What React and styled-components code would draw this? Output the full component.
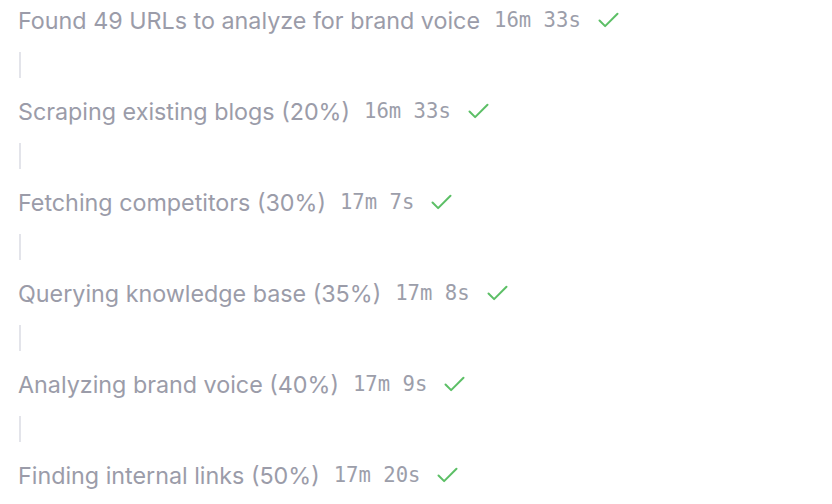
import React from "react";
import styled, { createGlobalStyle } from "styled-components";

const Global = createGlobalStyle`
  html, body { margin: 0; padding: 0; background: #ffffff; }
`;

const List = styled.div`
  display: flex;
  flex-direction: column;
  padding-left: 18px;
`;

const Row = styled.div`
  display: flex;
  align-items: center;
  height: 40px;
  gap: 14px;
`;

const Label = styled.span`
  font-family: Inter, "Noto Sans", sans-serif;
  font-size: 23.3px;
  color: #9b9ca9;
`;

const Time = styled.span`
  font-family: "DejaVu Sans Mono", "Liberation Mono", monospace;
  font-size: 20.6px;
  color: #9c9eaa;
`;

const Check = styled.svg`
  width: 27px;
  height: 27px;
  color: #5cbf66;
`;

const Connector = styled.div`
  width: 2px;
  height: 26px;
  margin: 12px 0 13px 1px;
  background: #e3e4ea;
`;

const steps = [
  ["Found 49 URLs to analyze for brand voice", "16m 33s"],
  ["Scraping existing blogs (20%)", "16m 33s"],
  ["Fetching competitors (30%)", "17m 7s"],
  ["Querying knowledge base (35%)", "17m 8s"],
  ["Analyzing brand voice (40%)", "17m 9s"],
  ["Finding internal links (50%)", "17m 20s"],
];

export default function App() {
  return (
    <>
      <Global />
      <List>
        {steps.map(([label, time], i) => (
          <React.Fragment key={i}>
            {i > 0 && <Connector />}
            <Row>
              <Label>{label}</Label>
              <Time>{time}</Time>
              <Check viewBox="0 0 24 24" fill="none" stroke="currentColor" strokeWidth="1.8" strokeLinecap="round" strokeLinejoin="round">
                <path d="M20 6 9 17l-5-5" />
              </Check>
            </Row>
          </React.Fragment>
        ))}
      </List>
    </>
  );
}
